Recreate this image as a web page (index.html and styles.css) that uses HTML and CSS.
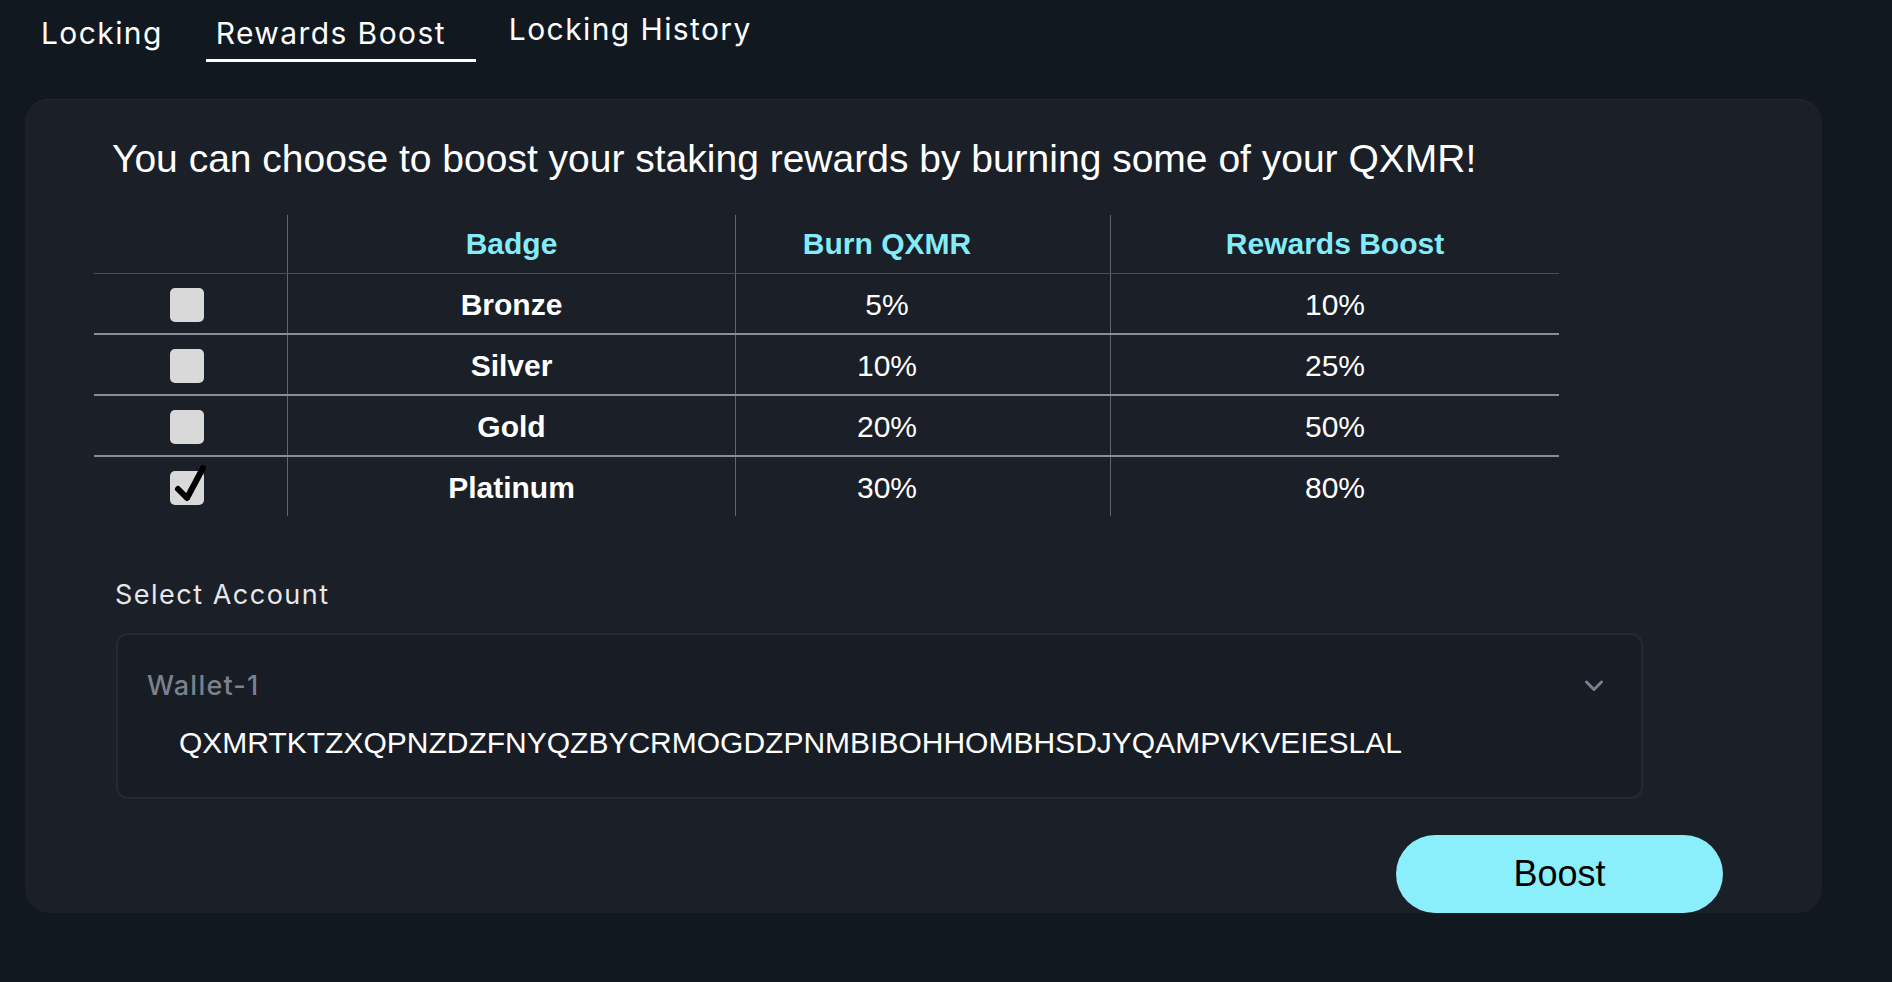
FILE: index.html
```html
<!DOCTYPE html>
<html lang="en">
<head>
    <meta charset="UTF-8">
    <meta name="viewport" content="width=device-width, initial-scale=1.0">
    <title>Rewards Boost</title>
    <link rel="stylesheet" href="styles.css">
</head>
<body>
    <nav class="tabs">
        <div class="tab">Locking</div>
        <div class="tab active">Rewards Boost</div>
        <div class="tab raised">Locking History</div>
    </nav>

    <div class="card">
        <h1 class="intro">You can choose to boost your staking rewards by burning some of your QXMR!</h1>

        <table class="boost-table">
            <thead>
                <tr>
                    <th class="col-check"></th>
                    <th class="col-badge">Badge</th>
                    <th class="col-burn">Burn QXMR</th>
                    <th class="col-boost">Rewards Boost</th>
                </tr>
            </thead>
            <tbody>
                <tr>
                    <td><span class="checkbox"></span></td>
                    <td class="badge">Bronze</td>
                    <td class="burn">5%</td>
                    <td>10%</td>
                </tr>
                <tr>
                    <td><span class="checkbox"></span></td>
                    <td class="badge">Silver</td>
                    <td class="burn">10%</td>
                    <td>25%</td>
                </tr>
                <tr>
                    <td><span class="checkbox"></span></td>
                    <td class="badge">Gold</td>
                    <td class="burn">20%</td>
                    <td>50%</td>
                </tr>
                <tr>
                    <td>
                        <span class="checkbox checked">
                            <svg class="tick" width="40" height="44" viewBox="0 0 40 44">
                                <path d="M9 26 L18 35 L34 5" fill="none" stroke="#000" stroke-width="6" stroke-linecap="round" stroke-linejoin="round"/>
                            </svg>
                        </span>
                    </td>
                    <td class="badge">Platinum</td>
                    <td class="burn">30%</td>
                    <td>80%</td>
                </tr>
            </tbody>
        </table>

        <label class="field-label">Select Account</label>
        <div class="select-box">
            <div class="select-top">
                <span class="wallet-name">Wallet-1</span>
                <svg class="chevron" width="20" height="14" viewBox="0 0 20 14">
                    <path d="M2.5 3 L10 10.5 L17.5 3" fill="none" stroke="#7a818c" stroke-width="3" stroke-linecap="round" stroke-linejoin="round"/>
                </svg>
            </div>
            <div class="address">QXMRTKTZXQPNZDZFNYQZBYCRMOGDZPNMBIBOHHOMBHSDJYQAMPVKVEIESLAL</div>
        </div>

        <div class="actions">
            <button class="boost-btn">Boost</button>
        </div>
    </div>
</body>
</html>
```

FILE: styles.css
```css
body {
    margin: 0;
    background-color: #121820;
    color: #fff;
    font-family: 'Liberation Sans', Arial, sans-serif;
}
.tabs {
    display: flex;
    align-items: flex-start;
    padding-left: 29px;
    gap: 31px;
    font-family: 'Inter', sans-serif;
    font-size: 30px;
    letter-spacing: 1.4px;
}
.tab {
    padding: 15px 12px 8px;
    line-height: 36px;
    border-bottom: 3px solid transparent;
}
.tab.active {
    border-bottom-color: #fff;
    padding-left: 10px;
    padding-right: 30px;
}
.tab.raised {
    padding-top: 11px;
    margin-left: -10px;
}
.card {
    box-sizing: border-box;
    width: 1797px;
    height: 814px;
    margin: 37px 0 0 25px;
    background-color: #1a1f28;
    border-top: 1px solid #252b34;
    border-radius: 24px;
    padding: 38px 0 0 69px;
    display: flex;
    flex-direction: column;
    align-items: flex-start;
}
.intro {
    margin: 0 0 36px 18px;
    font-size: 39px;
    font-weight: normal;
    line-height: 41px;
}
.boost-table {
    border-collapse: collapse;
    font-size: 30px;
    text-align: center;
}
.boost-table th {
    height: 58px;
    padding: 0;
    color: #84ebf8;
    font-weight: bold;
    border-bottom: 1px solid #4a4e55;
}
.boost-table td {
    height: 57px;
    padding: 2px 0 0;
    border-top: 2px solid #8a8d93;
}
.boost-table tbody tr:first-child td {
    border-top: none;
}
.boost-table th + th,
.boost-table td + td {
    border-left: 1px solid #62666c;
}
.col-check { width: 193px; }
.col-badge { width: 447px; }
.col-burn { width: 302px; }
.col-boost { width: 448px; }
.boost-table .col-burn,
.boost-table .burn {
    padding-right: 72px;
}
.badge {
    font-weight: bold;
}
.checkbox {
    position: relative;
    display: inline-block;
    width: 34px;
    height: 34px;
    margin: -2px 0 0 -8px;
    background-color: #d9d9d9;
    border-radius: 5px;
    vertical-align: middle;
}
.tick {
    position: absolute;
    left: -1px;
    top: -8px;
}
.field-label {
    margin: 64px 0 0 21px;
    font-family: 'Inter', sans-serif;
    font-size: 27px;
    letter-spacing: 1.5px;
    color: #e6e7e9;
    line-height: 30px;
}
.select-box {
    box-sizing: border-box;
    width: 1527px;
    height: 166px;
    margin: 23px 0 0 22px;
    border: 2px solid #242a34;
    border-radius: 12px;
    background-color: #181d25;
    padding: 36px 0 0 29px;
}
.select-top {
    display: flex;
    justify-content: space-between;
    align-items: center;
    padding-right: 37px;
}
.wallet-name {
    font-family: 'Inter', sans-serif;
    font-size: 27px;
    font-weight: 500;
    letter-spacing: 1.2px;
    color: #7a818c;
    line-height: 30px;
}
.address {
    margin: 25px 0 0 32px;
    font-size: 30px;
    line-height: 34px;
}
.actions {
    margin-top: auto;
    align-self: flex-end;
    padding-right: 99px;
}
.boost-btn {
    width: 327px;
    height: 78px;
    border: none;
    border-radius: 39px;
    background-color: #8aeefb;
    color: #000;
    font-family: 'Liberation Sans', Arial, sans-serif;
    font-size: 36px;
    cursor: pointer;
}
```
